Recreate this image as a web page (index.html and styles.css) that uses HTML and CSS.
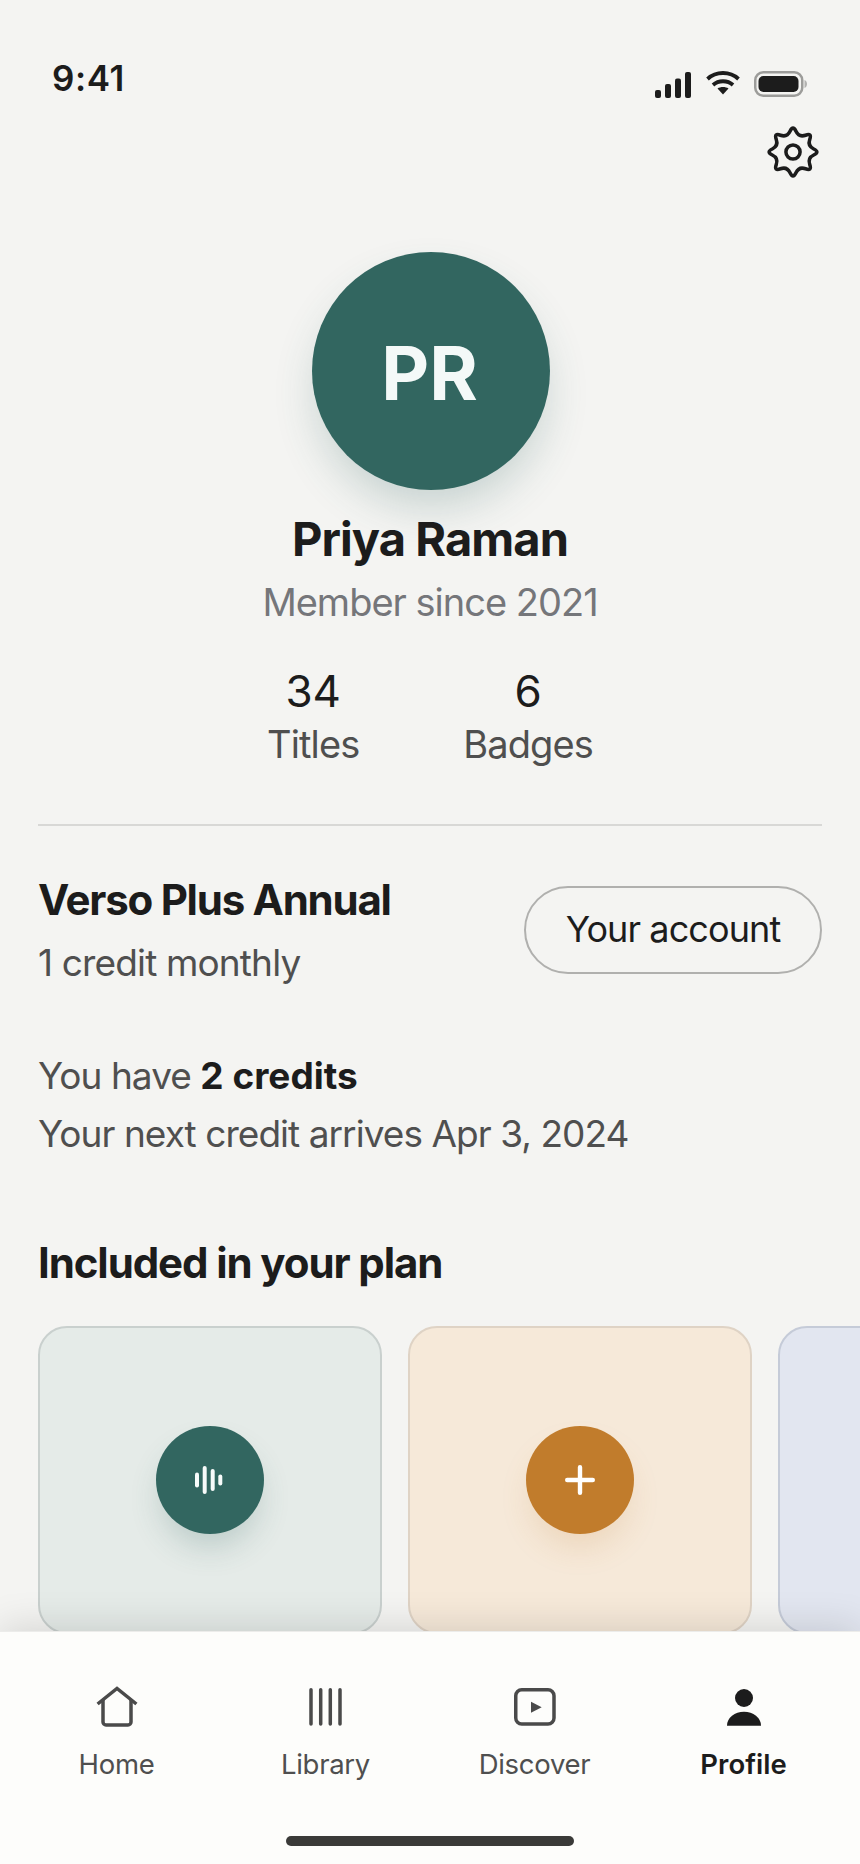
FILE: index.html
```html
<!DOCTYPE html>
<html lang="en">
<head>
  <meta charset="UTF-8">
  <title>Profile</title>
  <link rel="stylesheet" href="styles.css">
</head>
<body>
  <main class="screen">
    <!-- Status bar -->
    <div class="status">
      <span class="time">9:41</span>
      <div class="status-icons">
        <svg width="38" height="28" viewBox="0 0 38 28" fill="#1c1c1c">
          <rect x="1" y="19" width="6" height="8" rx="2"/>
          <rect x="11" y="13" width="6" height="14" rx="2"/>
          <rect x="21" y="7.5" width="6" height="19.5" rx="2"/>
          <rect x="31" y="1" width="6" height="26" rx="2"/>
        </svg>
        <svg width="34" height="24" viewBox="0 0 34 24" fill="none" stroke="#1c1c1c" stroke-width="3.8">
          <path d="M1.5 8 C10 0 24 0 32.5 8"/>
          <path d="M7 14 C12.5 9 21.5 9 27 14"/>
          <path d="M11.5 17.5 C14.5 15.5 19.5 15.5 22.5 17.5 L17 23.5 Z" fill="#1c1c1c" stroke="none"/>
        </svg>
        <svg width="54" height="27" viewBox="0 0 54 27">
          <rect x="1.25" y="1.25" width="47" height="23.5" rx="8" fill="none" stroke="#9c9c9a" stroke-width="2.5"/>
          <rect x="4.5" y="5" width="40" height="16" rx="5" fill="#1c1c1c"/>
          <path d="M50.5 9 C52.5 10 53 11.5 53 13 C53 14.5 52.5 16 50.5 17 Z" fill="#b2b2b0"/>
        </svg>
      </div>
    </div>

    <div class="top-actions">
      <svg width="52" height="52" viewBox="-25 -25 50 50" fill="none" stroke="#1c1c1c" stroke-width="3.4">
        <path d="M19.93 -2.87 Q26 0 19.93 2.87 Q13.86 5.74 16.12 12.06 Q18.38 18.38 12.06 16.12 Q5.74 13.86 2.87 19.93 Q0 26 -2.87 19.93 Q-5.74 13.86 -12.06 16.12 Q-18.38 18.38 -16.12 12.06 Q-13.86 5.74 -19.93 2.87 Q-26 0 -19.93 -2.87 Q-13.86 -5.74 -16.12 -12.06 Q-18.38 -18.38 -12.06 -16.12 Q-5.74 -13.86 -2.87 -19.93 Q0 -26 2.87 -19.93 Q5.74 -13.86 12.06 -16.12 Q18.38 -18.38 16.12 -12.06 Q13.86 -5.74 19.93 -2.87 Z"/>
        <circle cx="0" cy="0" r="6.8"/>
      </svg>
    </div>

    <!-- Profile header -->
    <section class="profile">
      <div class="avatar">PR</div>
      <h1 class="name">Priya Raman</h1>
      <p class="since">Member since 2021</p>
      <div class="stats">
        <div class="stat">
          <div class="stat-num">34</div>
          <div class="stat-label">Titles</div>
        </div>
        <div class="stat">
          <div class="stat-num">6</div>
          <div class="stat-label">Badges</div>
        </div>
      </div>
    </section>

    <hr class="divider">

    <!-- Plan -->
    <section class="plan">
      <div>
        <h2 class="title">Verso Plus Annual</h2>
        <p class="plan-sub">1 credit monthly</p>
      </div>
      <button class="account-btn">Your account</button>
    </section>

    <section class="credits">
      <p>You have <strong>2 credits</strong></p>
      <p>Your next credit arrives Apr 3, 2024</p>
    </section>

    <h2 class="title included-title">Included in your plan</h2>

    <div class="cards">
      <div class="card card-green">
        <div class="card-icon icon-green">
          <svg width="32" height="32" viewBox="0 0 32 32" fill="#f7fbfa">
            <rect x="1" y="8.5" width="4" height="15" rx="2"/>
            <rect x="8.7" y="2" width="4" height="28" rx="2"/>
            <rect x="16.7" y="5" width="4" height="22" rx="2"/>
            <rect x="24.3" y="10.5" width="4" height="11" rx="2"/>
          </svg>
        </div>
      </div>
      <div class="card card-peach">
        <div class="card-icon icon-orange">
          <svg width="32" height="32" viewBox="0 0 32 32" fill="none" stroke="#fff" stroke-width="4.4" stroke-linecap="round">
            <path d="M16 3.2 V28.8 M3.2 16 H28.8"/>
          </svg>
        </div>
      </div>
      <div class="card card-blue">
        <div class="card-icon icon-blue"></div>
      </div>
    </div>
  </main>

  <!-- Bottom tab bar -->
  <nav class="tabbar">
    <div class="tabs">
      <a class="tab">
        <svg width="44" height="44" viewBox="0 0 44 44" fill="none" stroke="#4a4a4a" stroke-width="3.5">
          <path d="M2.6 19 L22 3.5 L41.4 19"/>
          <path d="M8 15 V37 a3 3 0 0 0 3 3 H33 a3 3 0 0 0 3 -3 V15"/>
        </svg>
        <span>Home</span>
      </a>
      <a class="tab">
        <svg width="44" height="44" viewBox="0 0 44 44" fill="none" stroke="#4a4a4a" stroke-width="3.5" stroke-linecap="round">
          <path d="M7 4.8 V39 M16.7 4.8 V39 M26.3 4.8 V39 M36 4.8 V39"/>
        </svg>
        <span>Library</span>
      </a>
      <a class="tab">
        <svg width="44" height="44" viewBox="0 0 44 44" fill="none" stroke="#4a4a4a" stroke-width="3.5">
          <rect x="2.75" y="4.75" width="38.25" height="34.25" rx="6"/>
          <path d="M18 16.7 L28.7 22.2 L18 27.7 Z" fill="#4a4a4a" stroke="none"/>
        </svg>
        <span>Discover</span>
      </a>
      <a class="tab active">
        <svg width="44" height="44" viewBox="0 0 44 44" fill="#1c1c1c">
          <circle cx="22" cy="13" r="9"/>
          <path d="M5 40.7 A17 14 0 0 1 39 40.7 Z"/>
        </svg>
        <span>Profile</span>
      </a>
    </div>
    <div class="home-bar"></div>
  </nav>
</body>
</html>
```

FILE: styles.css
```css
* {
  box-sizing: border-box;
}

body {
  margin: 0;
  width: 860px;
  height: 1864px;
  display: flex;
  flex-direction: column;
  overflow: hidden;
  background-color: #f4f4f2;
  color: #1c1c1c;
  font-family: Inter, "Liberation Sans", sans-serif;
}

h1, h2, p {
  margin: 0;
}

.screen {
  flex: 1;
  min-height: 0;
  overflow: hidden;
}

/* Status bar */
.status {
  height: 126px;
  padding: 58px 52px 0 52px;
  display: flex;
  justify-content: space-between;
  align-items: flex-start;
}

.time {
  font-size: 35px;
  line-height: 40px;
  font-weight: 600;
  letter-spacing: 0.6px;
}

.status-icons {
  display: flex;
  align-items: flex-start;
  gap: 14px;
  margin-top: 13px;
}

.top-actions {
  padding-right: 41px;
  display: flex;
  justify-content: flex-end;
}

.top-actions svg {
  display: block;
}

/* Profile header */
.profile {
  margin-top: 74px;
  display: flex;
  flex-direction: column;
  align-items: center;
}

.avatar {
  width: 238px;
  height: 238px;
  margin-left: 2px;
  padding: 4px 3px 0 0;
  border-radius: 50%;
  background-color: #326660;
  color: #f4f9f8;
  display: flex;
  justify-content: center;
  align-items: center;
  font-size: 74px;
  font-weight: 700;
  box-shadow: 0 22px 44px -6px rgba(50, 102, 96, 0.24);
}

.name {
  margin-top: 21px;
  font-size: 47px;
  line-height: 56px;
  font-weight: 700;
  letter-spacing: -0.02em;
}

.since {
  margin-top: 12px;
  font-size: 38px;
  line-height: 46px;
  letter-spacing: -1px;
  color: #75767a;
}

.stats {
  margin-top: 42px;
  display: flex;
  gap: 104px;
}

.stat {
  text-align: center;
}

.stat-num {
  font-size: 44px;
  line-height: 48px;
  font-weight: 400;
}

.stat-label {
  margin-top: 6px;
  font-size: 38px;
  line-height: 46px;
  letter-spacing: -0.9px;
  color: #4f4f4f;
}

.divider {
  margin: 57px 38px 0;
  height: 2px;
  border: none;
  background-color: #d8d8d6;
}

/* Plan */
.plan {
  margin-top: 49px;
  padding: 0 38px;
  display: flex;
  justify-content: space-between;
  align-items: center;
}

.title {
  font-size: 42px;
  line-height: 50px;
  font-weight: 700;
  letter-spacing: -1.25px;
}

.plan-sub {
  margin-top: 16px;
  font-size: 37px;
  line-height: 44px;
  letter-spacing: -0.85px;
  color: #4f4f4f;
}

.account-btn {
  width: 298px;
  height: 88px;
  padding-bottom: 4px;
  border: 2px solid #b0b0ae;
  border-radius: 44px;
  background: transparent;
  color: #1c1c1c;
  font-family: inherit;
  font-size: 36px;
  letter-spacing: -0.9px;
  cursor: pointer;
}

.credits {
  margin-top: 62px;
  padding: 0 38px;
  font-size: 37px;
  line-height: 58px;
  letter-spacing: -0.95px;
  color: #4f4f4f;
}

.credits strong {
  color: #1c1c1c;
  font-weight: 700;
  letter-spacing: 0;
}

.included-title {
  margin-top: 75px;
  padding: 0 38px;
  letter-spacing: -1.1px;
}

/* Cards */
.cards {
  margin-top: 38px;
  padding-left: 38px;
  display: flex;
  gap: 26px;
}

.card {
  flex-shrink: 0;
  width: 344px;
  height: 308px;
  border-radius: 29px;
  border: 2px solid;
  display: flex;
  justify-content: center;
  align-items: center;
}

.card-green {
  background-color: #e5ebe8;
  border-color: #c9d0ce;
}

.card-peach {
  background-color: #f6e9d9;
  border-color: #dfd3c5;
}

.card-blue {
  background-color: #e2e6f0;
  border-color: #c5cbd8;
}

.card-icon {
  width: 108px;
  height: 108px;
  border-radius: 50%;
  display: flex;
  justify-content: center;
  align-items: center;
}

.icon-green {
  background-color: #326660;
  box-shadow: 0 18px 32px -6px rgba(50, 102, 96, 0.24);
}

.icon-orange {
  background-color: #c17c2c;
  box-shadow: 0 18px 32px -6px rgba(193, 124, 44, 0.18);
}

.icon-blue {
  background-color: #4a5f9c;
}

/* Tab bar */
.tabbar {
  position: relative;
  flex-shrink: 0;
  height: 233px;
  padding: 53px 12px 0;
  background-color: #fdfdfb;
  border-top: 1px solid #ececea;
  box-shadow: 0 -4px 36px rgba(0, 0, 0, 0.13);
  display: flex;
  flex-direction: column;
}

.tabs {
  display: grid;
  grid-template-columns: repeat(4, 1fr);
}

.tab {
  display: flex;
  flex-direction: column;
  align-items: center;
  font-size: 27.5px;
  line-height: 33px;
  letter-spacing: -0.3px;
  color: #4f4f4f;
}

.tab svg {
  display: block;
  margin-bottom: 19px;
}

.tab.active {
  color: #1c1c1c;
  font-weight: 600;
  letter-spacing: 0;
}

.home-bar {
  width: 288px;
  height: 10px;
  margin: 55px auto 0;
  border-radius: 5px;
  background-color: #3a3a38;
}
```
